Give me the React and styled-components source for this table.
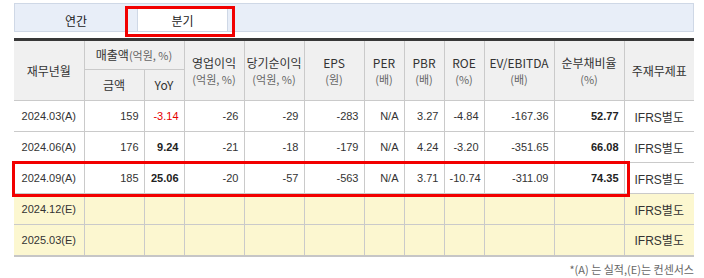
import React from "react";
import styled, { createGlobalStyle } from "styled-components";

const GlobalStyle = createGlobalStyle`
  body {
    margin: 0;
    background: #fff;
    font-family: "Noto Sans CJK KR", "Liberation Sans", sans-serif;
    color: #333;
  }
`;

const columns = [70, 60, 40, 60, 60, 60, 40, 40, 40, 70, 70, 70];

const rows = [
  {
    date: "2024.03(A)",
    values: ["159", "-3.14", "-26", "-29", "-283", "N/A", "3.27", "-4.84", "-167.36", "52.77"],
    negYoY: true,
  },
  {
    date: "2024.06(A)",
    values: ["176", "9.24", "-21", "-18", "-179", "N/A", "4.24", "-3.20", "-351.65", "66.08"],
  },
  {
    date: "2024.09(A)",
    values: ["185", "25.06", "-20", "-57", "-563", "N/A", "3.71", "-10.74", "-311.09", "74.35"],
  },
  { date: "2024.12(E)", estimate: true },
  { date: "2025.03(E)", estimate: true },
];

function App() {
  return (
    <>
      <GlobalStyle />
      <Page>
        <TabBar>
          <Tab>연간</Tab>
          <Tab active>분기</Tab>
        </TabBar>
        <Table>
          <colgroup>
            {columns.map((w, i) => (
              <col key={i} style={{ width: w }} />
            ))}
          </colgroup>
          <thead>
            <HeadRow height={30}>
              <Th rowSpan={2} first>재무년월</Th>
              <Th colSpan={2}>
                매출액<Unit inline>(억원, %)</Unit>
              </Th>
              <Th rowSpan={2}>
                영업이익<Unit>(억원, %)</Unit>
              </Th>
              <Th rowSpan={2}>
                당기순이익<Unit>(억원, %)</Unit>
              </Th>
              <Th rowSpan={2}>
                EPS<Unit>(원)</Unit>
              </Th>
              <Th rowSpan={2}>
                PER<Unit>(배)</Unit>
              </Th>
              <Th rowSpan={2}>
                PBR<Unit>(배)</Unit>
              </Th>
              <Th rowSpan={2}>
                ROE<Unit>(%)</Unit>
              </Th>
              <Th rowSpan={2}>
                EV/EBITDA<Unit>(배)</Unit>
              </Th>
              <Th rowSpan={2}>
                순부채비율<Unit>(%)</Unit>
              </Th>
              <Th rowSpan={2} last>주재무제표</Th>
            </HeadRow>
            <HeadRow height={31}>
              <Th>금액</Th>
              <Th>YoY</Th>
            </HeadRow>
          </thead>
          <tbody>
            {rows.map((row) => (
              <BodyRow key={row.date} estimate={row.estimate}>
                <DateCell>{row.date}</DateCell>
                {row.estimate
                  ? Array.from({ length: 10 }).map((_, i) => <NumCell key={i} />)
                  : row.values.map((v, i) => (
                      <NumCell
                        key={i}
                        bold={(i === 1 && !row.negYoY) || i === 9}
                        red={i === 1 && row.negYoY}
                      >
                        {v}
                      </NumCell>
                    ))}
                <TypeCell>IFRS별도</TypeCell>
              </BodyRow>
            ))}
          </tbody>
        </Table>
        <Note>*(A) 는 실적,(E)는 컨센서스</Note>
        <Highlight style={{ left: 125, top: 6, width: 110, height: 31 }} />
        <Highlight style={{ left: 12, top: 161, width: 618, height: 36 }} />
      </Page>
    </>
  );
}

export default App;

const Page = styled.div`
  position: relative;
  width: 680px;
  padding: 3px 0 0 14px;
`;

const TabBar = styled.div`
  display: flex;
  align-items: flex-end;
  height: 27px;
  background: #e8eef8;
  border: 1px solid #cfd8e6;
`;

const Tab = styled.div`
  box-sizing: border-box;
  width: ${(p) => (p.active ? "91px" : "122px")};
  height: ${(p) => (p.active ? "22px" : "27px")};
  padding-top: ${(p) => (p.active ? "0" : "5px")};
  display: flex;
  align-items: center;
  justify-content: center;
  font-size: 12px;
  color: #222;
  background: ${(p) => (p.active ? "#fff" : "transparent")};
  border-left: ${(p) => (p.active ? "1px solid #cfd8e6" : "none")};
  border-right: ${(p) => (p.active ? "1px solid #cfd8e6" : "none")};
`;

const Table = styled.table`
  width: 680px;
  margin-top: 6px;
  border-collapse: collapse;
  table-layout: fixed;
  border-top: 3px solid #383838;
  border-bottom: 2px solid #c6c6c6;
`;

const HeadRow = styled.tr`
  height: ${(p) => p.height}px;
  background: #f0f0f0;
`;

const Th = styled.th`
  padding: 0;
  font-weight: normal;
  font-size: 12px;
  line-height: 16px;
  color: #333;
  text-align: center;
  border: 1px solid #cacaca;
  border-top: none;
  border-left: ${(p) => (p.first ? "none" : "1px solid #cacaca")};
  border-right: ${(p) => (p.last ? "none" : "1px solid #cacaca")};
`;

const Unit = styled.span`
  display: ${(p) => (p.inline ? "inline" : "block")};
  font-size: 11px;
  line-height: 16px;
  color: #666;
`;

const BodyRow = styled.tr`
  height: 31px;
  background: ${(p) => (p.estimate ? "#fcf7d0" : "#fff")};
  border-top: 1px solid #cacaca;
`;

const BaseCell = styled.td`
  padding: 0 5px;
  font-size: 11px;
  font-family: "Liberation Sans", "Noto Sans CJK KR", sans-serif;
  color: #333;
  border-right: 1px solid #cacaca;
  white-space: nowrap;
`;

const DateCell = styled(BaseCell)`
  text-align: center;
  padding: 0;
`;

const NumCell = styled(BaseCell)`
  text-align: right;
  font-weight: ${(p) => (p.bold ? "bold" : "normal")};
  color: ${(p) => (p.red ? "#e60000" : p.bold ? "#222" : "#333")};
`;

const TypeCell = styled(BaseCell)`
  text-align: center;
  font-size: 12px;
  border-right: none;
`;

const Note = styled.div`
  margin-top: 4px;
  text-align: right;
  font-size: 11px;
  color: #666;
`;

const Highlight = styled.div`
  position: absolute;
  box-sizing: border-box;
  border: 3px solid #f20000;
  pointer-events: none;
`;
